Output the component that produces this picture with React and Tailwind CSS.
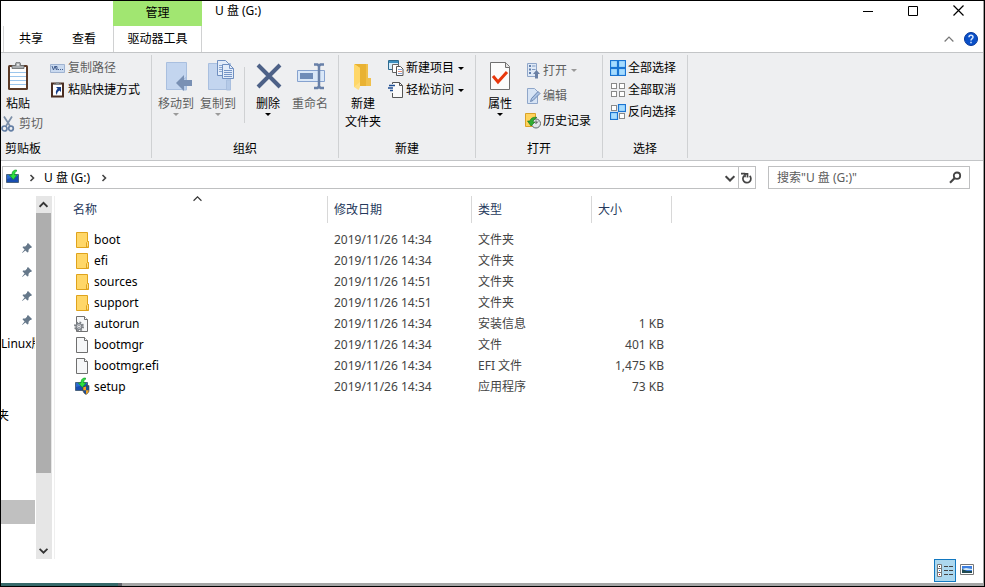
import clsx from 'clsx';

const files = [
  { name: 'boot', date: '2019/11/26 14:34', type: '文件夹', size: '', icon: FolderIcon },
  { name: 'efi', date: '2019/11/26 14:34', type: '文件夹', size: '', icon: FolderIcon },
  { name: 'sources', date: '2019/11/26 14:51', type: '文件夹', size: '', icon: FolderIcon },
  { name: 'support', date: '2019/11/26 14:51', type: '文件夹', size: '', icon: FolderIcon },
  { name: 'autorun', date: '2019/11/26 14:34', type: '安装信息', size: '1 KB', icon: ConfigIcon },
  { name: 'bootmgr', date: '2019/11/26 14:34', type: '文件', size: '401 KB', icon: FileIcon },
  { name: 'bootmgr.efi', date: '2019/11/26 14:34', type: 'EFI 文件', size: '1,475 KB', icon: FileIcon },
  { name: 'setup', date: '2019/11/26 14:34', type: '应用程序', size: '73 KB', icon: SetupIcon },
];

/* ---------- file icons ---------- */

function FolderIcon() {
  return (
    <svg width="16" height="16" viewBox="0 0 16 16">
      <path d="M1.5.5h11v9h1v6h-12z" fill="#ffd768" stroke="#dfa31c" />
      <path d="M11.5 15V10.5l1-1h1V15z" fill="#ffdf85" stroke="#dfa31c" />
    </svg>
  );
}

function FileIcon() {
  return (
    <svg width="16" height="16" viewBox="0 0 16 16">
      <path d="M1.5.5h8l3 3v12h-11z" fill="#f6f7f8" stroke="#6f6f6f" />
      <path d="M9.5.5v3h3" fill="#fff" stroke="#6f6f6f" />
    </svg>
  );
}

function ConfigIcon() {
  return (
    <svg width="16" height="16" viewBox="0 0 16 16" overflow="visible">
      <path d="M1.5.5h8l3 3v12h-11z" fill="#f6f7f8" stroke="#6f6f6f" />
      <path d="M9.5.5v3h3" fill="#fff" stroke="#6f6f6f" />
      <circle cx="4" cy="10.500" r="4" fill="none" stroke="#7c8086" strokeWidth="2" strokeDasharray="1.7 1.44" />
      <circle cx="4" cy="10.500" r="2.900" fill="#d5d9de" stroke="#7c8086" strokeWidth="1.300" />
      <circle cx="4" cy="10.500" r="1.200" fill="#fff" stroke="#7c8086" strokeWidth=".7" />
    </svg>
  );
}

function DriveShape() {
  return (
    <>
      <path d="M.5 3.500h12v8H.5z" fill="#2b6bd0" stroke="#4a6380" />
      <path d="M1 8l11-3v6H1z" fill="#184db0" />
      <path d="M10.500-1C7-1 6 1 6 4H3.500l3.800 4.500L11 4H8.700C8.700 2 9 .8 10.500.3z" fill="#2ee03e" stroke="#0c9a25" strokeWidth=".7" />
    </>
  );
}

function SetupIcon() {
  return (
    <svg width="16" height="16" viewBox="0 0 16 16" overflow="visible">
      <DriveShape />
      <path d="M11 7.200c1.200 0 2-.7 3-.7v5c0 2-1.800 3-3 4-1.400-1-3-2-3-4V8c1 0 2-.2 3-.8z" fill="#1c4f9c" stroke="#54431f" strokeWidth=".6" />
      <path d="M11 7.500v3.800H8.300V8.200zM11 11.300h2.700c0 2-1.500 3-2.700 4z" fill="#f8a51b" />
    </svg>
  );
}

function DriveIcon() {
  return (
    <svg width="14" height="14" viewBox="0 0 14 14" overflow="visible">
      <DriveShape />
    </svg>
  );
}

function PinIcon() {
  return (
    <svg width="10" height="10" viewBox="0 0 10 10">
      <path d="M6 0l4 4-1 1h-.8L6.600 6.800 6.400 9 5.400 9.400 3.400 7.400.3 10 0 9.700 2.600 6.600.6 4.600 1 3.600l2.200-.2L5 1.800V1z" fill="#66788a" />
    </svg>
  );
}

/* ---------- ribbon icons ---------- */

function PasteIcon() {
  return (
    <svg width="22" height="32" viewBox="0 0 22 32">
      <rect x="1" y="3" width="20" height="25" rx="1.500" fill="#5b3a27" />
      <path d="M3 5h16v21H3z" fill="#fff" />
      <path d="M3 10.500h16M3 14.500h16M3 18.500h16M3 22.500h16" stroke="#9cc6ec" />
      <path d="M5 6.500V3.500h3.500V2a2.500 2 0 015 0v1.500H17v3z" fill="#a9adb0" stroke="#65686a" strokeWidth=".8" />
      <circle cx="11" cy="2.800" r="1" fill="#eee" />
    </svg>
  );
}

function CutIcon() {
  return (
    <svg width="14" height="16" viewBox="0 0 14 16" fill="none">
      <path d="M3 0.500L9 10M11 0.500L5 10" stroke="#7c8fa8" strokeWidth="1.700" />
      <circle cx="3.500" cy="12.500" r="2.500" stroke="#647fa5" strokeWidth="1.700" />
      <circle cx="10" cy="12.500" r="2.300" stroke="#647fa5" strokeWidth="1.700" />
    </svg>
  );
}

function CopyPathIcon() {
  return (
    <svg width="16" height="16" viewBox="0 0 16 16">
      <path d="M.5 4.500h14v8H.5z" fill="#c9d9ef" stroke="#9fb3d1" />
      <path d="M2 6l1.500 4L5 6l1.500 4M5 6.500h2v3.500" fill="none" stroke="#45608f" />
      <path d="M8 9.500h1M10 9.500h1M12 9.500h1" stroke="#45608f" />
    </svg>
  );
}

function PasteShortcutIcon() {
  return (
    <svg width="16" height="16" viewBox="0 0 16 16">
      <path d="M2 1.500h11v13H2z" fill="#fff" stroke="#4b2e22" strokeWidth="2" />
      <path d="M4 3V1.500h2V0h3v1.500h2V3z" fill="#85888b" />
      <path d="M6 5h5v5L9.400 8.400C7.500 9.500 7 11 7 13c-2-2.500-1-5 .7-6.300z" fill="#173f8c" />
    </svg>
  );
}

function MoveToIcon() {
  return (
    <svg width="28" height="32" viewBox="0 0 28 32" overflow="visible">
      <path d="M4.500.5h20v27h-20z" fill="#c3d5ef" stroke="#a9bfdf" />
      <path d="M20.500 28V18l4-3V28z" fill="#b5cae8" stroke="#a9bfdf" />
      <path d="M14 21l8-8v5h8v6h-8v5z" fill="#7990b4" />
    </svg>
  );
}

function CopyToIcon() {
  return (
    <svg width="28" height="32" viewBox="0 0 28 32" overflow="visible">
      <path d="M4.500 1.500h22v26h-22z" fill="#c3d5ef" stroke="#a9bfdf" />
      <path d="M22.500 28V18h4v10z" fill="#b5cae8" stroke="#a9bfdf" />
      <path d="M13.500-1.500h8l3 3v12h-11z" fill="#e3ecf9" stroke="#6f8fc0" />
      <path d="M15 3.500h8M15 5.500h8M15 7.500h8M15 9.500h8" stroke="#8ba7d2" />
      <path d="M18.500 2.500h7l4 4v10h-11z" fill="#e3ecf9" stroke="#6f8fc0" />
      <path d="M25.500 2.500v4h4M20 8.500h8M20 10.500h8M20 12.500h8M20 14.500h8" fill="none" stroke="#7695c6" />
    </svg>
  );
}

function DeleteIcon() {
  return (
    <svg width="28" height="32" viewBox="0 0 28 32" overflow="visible">
      <path d="M4 3l22 22M26 3L4 25" stroke="#4d6187" strokeWidth="4" />
    </svg>
  );
}

function RenameIcon() {
  return (
    <svg width="30" height="32" viewBox="0 0 30 32">
      <path d="M2.500 8.500h27v11h-27z" fill="#d9e7f8" stroke="#86a2cf" />
      <path d="M5 11h13v6H5z" fill="#6f8cb8" />
      <path d="M19 2.500h3.500l1.500 1.500 1.500-1.500H29M19 26h3.500l1.500-1.500 1.500 1.500H29M24 4v21" fill="none" stroke="#6880a8" strokeWidth="2.500" />
    </svg>
  );
}

function NewFolderIcon() {
  return (
    <svg width="22" height="32" viewBox="0 0 22 32">
      <path d="M3 2h13v14h3v8H3z" fill="#e9b233" />
      <path d="M14 2h2v14h3v8h-5z" fill="#f0c04c" />
      <path d="M2 2l6 4v19l-1.500 3L2 25z" fill="#ffdf84" />
      <path d="M2 2l6 4v14L2 25z" fill="#ffd768" />
    </svg>
  );
}

function NewItemIcon() {
  return (
    <svg width="16" height="16" viewBox="0 0 16 16">
      <path d="M.5.5h10v9H.5z" fill="#d5ecfa" stroke="#2d6a8f" />
      <path d="M1 1h9v2H1z" fill="#3c8fbf" />
      <path d="M4.500 4.500h6v8h-6z" fill="#fff" stroke="#666" />
      <path d="M8.500 6.500h4l2.500 2.500v6.500H8.500z" fill="#fff" stroke="#555" />
      <path d="M10 9.500h4M10 13.500h4" stroke="#8aa5d5" />
      <path d="M10 11.500h4" stroke="#e08a72" />
    </svg>
  );
}

function EasyAccessIcon() {
  return (
    <svg width="16" height="16" viewBox="0 0 16 16">
      <path d="M4.500.5h7l3 3v12h-10z" fill="#fafafa" />
      <path d="M4.500 2V.5h7l3 3v12h-10V11" fill="none" stroke="#555" />
      <path d="M11.500.5v3h3" fill="none" stroke="#555" />
      <path d="M1 3.500h6M0 6h5M2 8.500h3" stroke="#1f4e93" strokeWidth="1.300" />
    </svg>
  );
}

function PropertiesIcon() {
  return (
    <svg width="22" height="32" viewBox="0 0 22 32">
      <path d="M1.500.5h15l4 4v23h-19z" fill="#fcfcfc" stroke="#707070" />
      <path d="M16.500.5v5h4" fill="#e4e4e4" stroke="#707070" />
      <path d="M4 14l5 6 9-10" fill="none" stroke="#e8380d" strokeWidth="3" />
    </svg>
  );
}

function OpenIcon() {
  return (
    <svg width="16" height="16" viewBox="0 0 16 16">
      <path d="M2.500.5h9v13h-9z" fill="#dfe9f6" stroke="#8fa6c9" />
      <path d="M4 2h2v2H4zM4 5.500h2v2H4zM4 9h2v2H4z" fill="#6280ad" />
      <path d="M7 3h3.500M7 6.500h3.500" stroke="#7f99c0" />
      <path d="M8 11l3.500-4L15 11h-2v4.500h-3V11z" fill="#6a80a4" />
    </svg>
  );
}

function EditIcon() {
  return (
    <svg width="16" height="16" viewBox="0 0 16 16">
      <path d="M2.500.5h7l3 3v12h-10z" fill="#d7e4f5" stroke="#8fa6c9" />
      <path d="M5.500 13.500l1-3L13 3.500l2 2-7 7z" fill="#a9c1e2" stroke="#6d88b3" />
    </svg>
  );
}

function HistoryIcon() {
  return (
    <svg width="16" height="16" viewBox="0 0 16 16">
      <path d="M.5.5h10v13H.5z" fill="#ffd35c" stroke="#d9a228" />
      <circle cx="11" cy="10.500" r="4.500" fill="#dfe5e8" stroke="#5f686d" />
      <path d="M11 7.500v3l2-2" fill="none" stroke="#444" />
      <path d="M12 4.500C8 3.500 5.500 5.500 5 8H2.500L6 13l4-4H8c.3-2 2-3.500 4-4.500z" fill="#2fae33" stroke="#15721d" strokeWidth=".6" />
    </svg>
  );
}

const squareSpots = [[0, 0], [8, 0], [0, 8], [8, 8]];

function SelectIcon({ filled }) {
  return (
    <svg width="16" height="16" viewBox="0 0 16 16">
      {squareSpots.map(([x, y], i) =>
        filled.includes(i) ? (
          <rect key={i} x={x + 0.5} y={y + 0.5} width="7" height="7" fill="#a6dcff" stroke="#1a74d2" strokeWidth="1.200" />
        ) : (
          <rect key={i} x={x + 1.5} y={y + 1.5} width="5" height="5" fill="#fff" stroke="#8a8a8a" />
        )
      )}
    </svg>
  );
}

function Chevron({ dir = 'down', size = 8, thin, className }) {
  const paths = {
    down: 'M0.500 2.500L4 6l3.500-3.500',
    up: 'M0.500 6L4 2.500 7.500 6',
    right: 'M2.500 1L5.500 4l-3 3',
  };
  return (
    <svg width={size} height={size} viewBox="0 0 8 8" fill="none" stroke="currentColor" strokeWidth={thin ? 1 : 1.6} className={className}>
      <path d={paths[dir]} />
    </svg>
  );
}

function Caret() {
  return (
    <svg width="6" height="3" viewBox="0 0 6 3" fill="currentColor">
      <path d="M0 0h6L3 3z" />
    </svg>
  );
}

/* ---------- ribbon ---------- */

function BigButton({ icon, label, second, caret, disabled }) {
  return (
    <button
      className={clsx('w-[42px] flex flex-col items-center pt-[7px] leading-[18px] whitespace-nowrap', disabled && 'text-[#5f5f5f]')}
      disabled={disabled}
    >
      <span className="h-[33px]">{icon}</span>
      <span>{label}</span>
      {second && <span>{second}</span>}
      {caret && <span className={clsx('flex', disabled && 'text-[#9a9a9a]')}><Caret /></span>}
    </button>
  );
}

function SmallButton({ icon, label, caret, disabled, tall }) {
  return (
    <button
      className={clsx('flex items-center gap-0.5 whitespace-nowrap', tall ? 'h-[25px]' : 'h-[22px]', disabled && 'text-[#5f5f5f]')}
      disabled={disabled}
    >
      {icon}
      <span>{label}</span>
      {caret && <span className={clsx('ml-0.5', disabled && 'text-[#9a9a9a]')}><Caret /></span>}
    </button>
  );
}

function Group({ title, className, titleClass = 'text-center', children }) {
  return (
    <section className={clsx('border-r border-[#cfd1d3] flex flex-col shrink-0', className)}>
      <div className="h-[85px] flex items-start">{children}</div>
      <h2 className={clsx('leading-[18px]', titleClass)}>{title}</h2>
    </section>
  );
}

function Ribbon() {
  return (
    <div className="bg-[#eeeff1] border-y border-[#c3c5c7] pt-0.5 pb-0.5 flex overflow-hidden">
      <Group title="剪贴板" className="w-[151px]" titleClass="pl-1">
        <div className="w-[49px] flex flex-col">
          <div className="-ml-1"><BigButton icon={<PasteIcon />} label="粘贴" /></div>
          <div className="flex gap-1">
            <SmallButton icon={<CutIcon />} label={<span className="pl-0.5">剪切</span>} disabled />
          </div>
        </div>
        <div className="pt-0.5">
          <SmallButton icon={<CopyPathIcon />} label="复制路径" disabled />
          <SmallButton icon={<PasteShortcutIcon />} label="粘贴快捷方式" />
        </div>
      </Group>
      <Group title="组织" className="w-[187px] px-[3px]">
        <BigButton icon={<MoveToIcon />} label="移动到" caret disabled />
        <BigButton icon={<CopyToIcon />} label="复制到" caret disabled />
        <div className="h-14 w-px bg-[#cfd1d3] mt-3 ml-[5px] mr-0.5" />
        <BigButton icon={<DeleteIcon />} label="删除" caret />
        <BigButton icon={<RenameIcon />} label="重命名" disabled />
      </Group>
      <Group title="新建" className="w-[137px] px-[3px]">
        <BigButton icon={<NewFolderIcon />} label="新建" second="文件夹" />
        <div className="pl-1 pt-0.5">
          <SmallButton icon={<NewItemIcon />} label="新建项目" caret />
          <SmallButton icon={<EasyAccessIcon />} label="轻松访问" caret />
        </div>
      </Group>
      <Group title="打开" className="w-[127px] px-[3px]">
        <BigButton icon={<PropertiesIcon />} label="属性" caret />
        <div className="pl-1 pt-[3px]">
          <SmallButton icon={<OpenIcon />} label="打开" caret disabled tall />
          <SmallButton icon={<EditIcon />} label="编辑" disabled tall />
          <SmallButton icon={<HistoryIcon />} label="历史记录" tall />
        </div>
      </Group>
      <Group title="选择" className="w-[85px]">
        <div className="pl-[7px] pt-0.5">
          <SmallButton icon={<SelectIcon filled={[0, 1, 2, 3]} />} label="全部选择" />
          <SmallButton icon={<SelectIcon filled={[]} />} label="全部取消" />
          <SmallButton icon={<SelectIcon filled={[1, 2]} />} label="反向选择" />
        </div>
      </Group>
    </div>
  );
}

/* ---------- window parts ---------- */

function Header() {
  return (
    <header>
      <div className="flex h-[25px]">
        <div className="w-28 shrink-0" />
        <div className="w-[89px] shrink-0 bg-[#a1e671] leading-6 text-center">管理</div>
        <h1 className="flex-1 pl-[13px] leading-5">U 盘 (G:)</h1>
        <button aria-label="最小化" className="w-[45px] h-[18px] flex items-center justify-center">
          <svg width="11" height="11" viewBox="0 0 11 11"><path d="M0 6.500h10" stroke="#000" /></svg>
        </button>
        <button aria-label="最大化" className="w-[45px] h-[18px] flex items-center justify-center">
          <svg width="11" height="11" viewBox="0 0 11 11"><path d="M.5 1.500h9v9h-9z" fill="none" stroke="#000" /></svg>
        </button>
        <button aria-label="关闭" className="w-[45px] h-[18px] flex items-center justify-center mr-0.5">
          <svg width="11" height="11" viewBox="0 0 11 11"><path d="M.5.5l10 10M10.500.5l-10 10" stroke="#000" strokeWidth="1.200" /></svg>
        </button>
      </div>
      <nav className="flex h-[26px] ml-0.5 border-l border-[#d5d6d7]">
        <button className="pl-[15px] w-[55px] text-left">共享</button>
        <button className="pl-[13px] w-[54px] text-left">查看</button>
        <button className="w-[89px] border-x border-[#d0d1d2] text-center">驱动器工具</button>
        <div className="flex-1" />
        <button aria-label="折叠功能区" className="text-[#777]"><Chevron dir="up" size={10} thin /></button>
        <button aria-label="帮助" className="ml-[10px] mr-[5px]">
          <svg width="14" height="14" viewBox="0 0 14 14">
            <circle cx="7" cy="7" r="6.500" fill="#0a50c8" stroke="#06379a" />
            <path d="M5 5.200a2 1.900 0 114 0c0 1.400-2 1.500-2 3.200M7 9.700v1.600" fill="none" stroke="#d5e6ff" strokeWidth="1.500" />
          </svg>
        </button>
      </nav>
    </header>
  );
}

function AddressBar() {
  return (
    <div className="flex pt-[5px] pl-px pr-[13px]">
      <div className="flex flex-1 h-[23px] border border-[#bfc0c1] items-center text-[#444]">
        <span className="pl-[3px] pr-2"><DriveIcon /></span>
        <Chevron dir="right" />
        <button className="pl-2 pr-2.5 text-black">U 盘 (G:)</button>
        <Chevron dir="right" />
        <div className="flex-1" />
        <button aria-label="以前的位置" className="w-[17px] h-full flex items-center justify-center">
          <Chevron size={10} />
        </button>
        <button aria-label="刷新" className="w-[17px] h-full border-l border-[#bfc0c1] flex items-center justify-center">
          <svg width="12" height="12" viewBox="0 0 12 12" fill="none" stroke="#444" strokeWidth="1.700">
            <path d="M8.700 3.800A4 4 0 113.300 3.600" />
            <path d="M5 1.600h4.200M5.200 1v4.300" transform="translate(14.200 0) scale(-1 1) translate(5 0)" />
            <path d="M3 1.800h3.500v3.700" />
          </svg>
        </button>
      </div>
      <label className="flex w-[202px] h-[23px] ml-3 border border-[#bfc0c1] items-center pl-2 pr-[7px]">
        <input type="search" aria-label="搜索" placeholder='搜索"U 盘 (G:)"' className="flex-1 min-w-0 outline-none placeholder:text-[#5c5c5c]" />
        <svg width="13" height="13" viewBox="0 0 13 13" fill="none" stroke="#444">
          <circle cx="8" cy="4.700" r="3.200" strokeWidth="1.800" />
          <path d="M5.500 7.200L1 11.700" strokeWidth="2.200" />
        </svg>
      </label>
    </div>
  );
}

function Sidebar() {
  return (
    <aside className="flex shrink-0">
      <ul className="w-[35px] pt-10 pr-px overflow-hidden">
        {[1, 2, 3, 4].map((n) => (
          <li key={n} className="h-6 flex items-center justify-end pr-[3px]"><PinIcon /></li>
        ))}
        <li className="h-[72px] leading-6 whitespace-nowrap overflow-hidden">Linux版</li>
        <li className="h-24 leading-6 flex w-2 justify-end overflow-hidden">夹</li>
        <li className="h-6 bg-[#c0c0c0]" />
      </ul>
      <div className="w-4 bg-[#e6e6e6] flex flex-col text-[#333]">
        <button aria-label="向上滚动" className="w-[15px] h-[17px] flex items-center justify-center"><Chevron dir="up" size={9} /></button>
        <div className="flex-1 flex flex-col">
          <div className="grow-[79] w-[15px] bg-[#aeaeae]" />
          <div className="grow-[21]" />
        </div>
        <button aria-label="向下滚动" className="w-[15px] h-[17px] flex items-center justify-center"><Chevron size={9} /></button>
      </div>
      <div className="w-[3px] border-r border-[#efefef]" />
    </aside>
  );
}

function Th({ children, className }) {
  return (
    <th className={clsx('p-0 h-[33px] align-top text-left font-normal text-[#26395c]', className)}>
      <div className="h-[27px] leading-[27px] border-l border-[#d8d8d8] pl-1.5">{children}</div>
    </th>
  );
}

function FileTable() {
  return (
    <table className="table-fixed w-[617px] border-collapse self-start">
      <thead>
        <tr>
          <th className="relative w-[272px] p-0 pl-[18px] h-[33px] align-top text-left font-normal leading-[27px] text-[#26395c]">
            名称
            <Chevron dir="up" size={9} thin className="absolute left-[138px] -top-0.5 text-[#333]" />
          </th>
          <Th className="w-36">修改日期</Th>
          <Th className="w-[120px]">类型</Th>
          <th className="w-[81px] p-0 h-[33px] align-top text-left font-normal text-[#26395c]">
            <div className="h-[27px] leading-[27px] border-x border-[#d8d8d8] pl-1.5">大小</div>
          </th>
        </tr>
      </thead>
      <tbody>
        {files.map(({ name, date, type, size, icon: Icon }) => (
          <tr key={name} className="h-[21px] leading-[21px] text-[#444]">
            <td className="p-0 pl-5">
              <div className="flex items-center gap-[3px] text-black"><Icon />{name}</div>
            </td>
            <td className="p-0 pl-[7px]">{date}</td>
            <td className="p-0 pl-[7px]">{type}</td>
            <td className="p-0 pr-2 text-right">{size}</td>
          </tr>
        ))}
      </tbody>
    </table>
  );
}

function StatusBar() {
  return (
    <footer className="flex h-6 justify-end pr-[9px] gap-1">
      <button aria-label="详细信息" className="w-[22px] h-[23px] bg-[#acd8ef] border border-[#1278c0] flex items-center justify-center">
        <svg width="17" height="14" viewBox="0 0 17 14">
          <path d="M.5.500h4v12h-4zM.5 4.500h4M.5 8.500h4" fill="#fff" stroke="#777" />
          <path d="M2 2h1v1H2z" fill="#333" />
          <path d="M2 6h1v1H2z" fill="#0878e0" />
          <path d="M2 10h1v1H2z" fill="#d01010" />
          <path d="M7 2.500h4M12 2.500h4M7 6.500h4M12 6.500h4M7 10.500h4M12 10.500h4" stroke="#444" />
        </svg>
      </button>
      <button aria-label="大图标" className="h-[21px]">
        <svg width="14" height="11" viewBox="0 0 14 11">
          <path d="M.5.5h13v10H.5z" fill="#fff" stroke="#777" />
          <path d="M2 2h10v7H2z" fill="#3d7fe0" />
          <path d="M2 5l4-1 6 1v1H2z" fill="#d5ebf7" />
          <path d="M2 5l5 2h5v2H2z" fill="#1f4a52" />
        </svg>
      </button>
    </footer>
  );
}

export default function App() {
  return (
    <div className="min-h-screen flex flex-col bg-white border border-black text-black text-xs font-['Noto_Sans','Noto_Sans_CJK_SC',sans-serif]">
      <div className="flex-1 flex flex-col border-r border-[#a0a0a0]">
        <Header />
        <Ribbon />
        <AddressBar />
        <main className="flex-1 flex pt-[7px]">
          <Sidebar />
          <FileTable />
        </main>
        <StatusBar />
      </div>
      <div className="flex h-[3px]">
        <div className="w-[117px] bg-[#37696a]" />
        <div className="w-1 bg-[#62636a]" />
        <div className="flex-1 bg-[#a5a5a5]" />
      </div>
    </div>
  );
}
